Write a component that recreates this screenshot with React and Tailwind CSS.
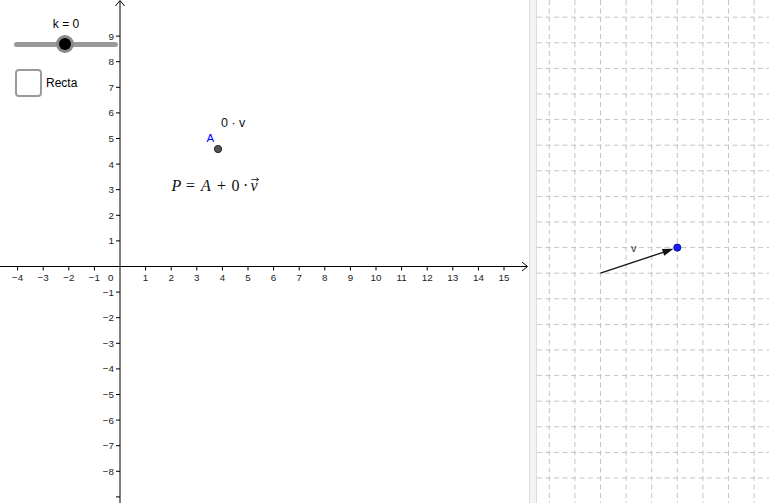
import React from 'react';

const U = 25.6;
const OX = 120;
const OY = 266.5;

const xTicks = [-4, -3, -2, -1, 1, 2, 3, 4, 5, 6, 7, 8, 9, 10, 11, 12, 13, 14, 15];
const yTicks = [9, 8, 7, 6, 5, 4, 3, 2, 1, -1, -2, -3, -4, -5, -6, -7, -8, -9];

const fmt = (n) => (n < 0 ? '\u2212' + Math.abs(n) : String(n));

/**
 * Graphics view — ejes, punto A y la fórmula.
 */
const GraphicsView = () => {
    const ax = OX + 3.83 * U;
    const ay = OY - 4.59 * U;

    return (
        <div className="relative w-[529px] h-full shrink-0">
            <svg width="529" height="503" className="block" style={{ fontFamily: '"Liberation Sans", Arial, sans-serif' }}>
                {/* x axis */}
                <line x1="0" y1={OY} x2="527" y2={OY} stroke="#000" strokeWidth="1" />
                <polyline points={`522,${OY - 4.5} 527.5,${OY} 522,${OY + 4.5}`} fill="none" stroke="#000" strokeWidth="1" />
                {/* y axis */}
                <line x1={OX} y1="503" x2={OX} y2="1" stroke="#000" strokeWidth="1" />
                <polyline points={`${OX - 4.5},6 ${OX},0.5 ${OX + 4.5},6`} fill="none" stroke="#000" strokeWidth="1" />

                {xTicks.map((n) => {
                    const x = OX + n * U;
                    return (
                        <g key={'x' + n}>
                            <line x1={x} y1={OY} x2={x} y2={OY + 4} stroke="#000" strokeWidth="1" />
                            <text x={x} y={OY + 14.5} fontSize="9.8" textAnchor="middle" fill="#222">{fmt(n)}</text>
                        </g>
                    );
                })}
                <text x="113.5" y={OY + 14.5} fontSize="9.8" textAnchor="end" fill="#222">0</text>

                {yTicks.map((n) => {
                    const y = OY - n * U;
                    return (
                        <g key={'y' + n}>
                            <line x1={OX - 4} y1={y} x2={OX} y2={y} stroke="#000" strokeWidth="1" />
                            {n !== -9 && (
                                <text x="114" y={y + 3.5} fontSize="9.8" textAnchor="end" fill="#222">{fmt(n)}</text>
                            )}
                        </g>
                    );
                })}

                {/* punto A */}
                <circle cx={ax} cy={ay} r="3.6" fill="#555" stroke="#222" strokeWidth="1" />
                <text x="206.5" y="142" fontSize="11.5" fill="#0000ff">A</text>
                <text x="221" y="126.5" fontSize="12.5" fill="#111">0 · v</text>

                {/* fórmula */}
                <g fontSize="16" fill="#111" style={{ fontFamily: '"Liberation Serif", "Times New Roman", serif' }}>
                    <text x="171.5" y="190.5" fontStyle="italic">P</text>
                    <text x="186" y="190.5">=</text>
                    <text x="201" y="190.5" fontStyle="italic">A</text>
                    <text x="217" y="190.5">+</text>
                    <text x="231.5" y="190.5">0</text>
                    <text x="243" y="190.5">·</text>
                    <text x="250.5" y="190.5" fontStyle="italic">v</text>
                </g>
                <path d="M251.5 179.5 H258.5 M256.3 177.7 L258.8 179.5 L256.3 181.3" fill="none" stroke="#111" strokeWidth="0.8" />
            </svg>

            {/* slider + checkbox */}
            <div className="absolute left-0 top-0 pt-[18px] pl-[12px] flex flex-col font-['Liberation_Sans',Arial,sans-serif] text-[12px] text-black">
                <div className="w-[108px] text-center leading-none">k = 0</div>
                <div className="relative w-[108px] h-[20px] flex items-center mt-[4px]">
                    <div className="w-full h-[5px] rounded-full bg-[#9a9a9a] mx-[2px]" />
                    <div className="absolute left-[44px] top-[1px] w-[18px] h-[18px] rounded-full bg-[#8a8a8a] flex items-center justify-center">
                        <div className="w-[12px] h-[12px] rounded-full bg-black" />
                    </div>
                </div>
                <div className="flex items-center gap-[4px] mt-[15px] ml-[3px]">
                    <div className="w-[27px] h-[28px] rounded-[4px] border-2 border-[#9a9a9a] bg-white" />
                    <span className="leading-none">Recta</span>
                </div>
            </div>
        </div>
    );
};

const gx = Array.from({ length: 9 }, (_, i) => 12.3 + i * U);
const gy = Array.from({ length: 20 }, (_, i) => 17.2 + i * U);

/**
 * Vista gráfica 2 — cuadrícula con el vector v.
 */
const VectorView = () => {
    const x1 = 12.3 + 2 * U;
    const y1 = 17.2 + 10 * U;
    const x2 = 12.3 + 5 * U;
    const y2 = 17.2 + 9 * U;
    const ang = Math.atan2(y2 - y1, x2 - x1);
    const len = 11;
    const half = 3.6;
    const bx = x2 - 4 * Math.cos(ang);
    const by = y2 - 4 * Math.sin(ang);
    const cx = bx - len * Math.cos(ang);
    const cy = by - len * Math.sin(ang);
    const px = -Math.sin(ang) * half;
    const py = Math.cos(ang) * half;

    return (
        <div className="flex-1 h-full bg-white">
            <svg width="232" height="503" className="block" style={{ fontFamily: '"Liberation Sans", Arial, sans-serif' }}>
                {gx.map((x) => (
                    <line key={'gx' + x} x1={x} y1="0" x2={x} y2="503" stroke="#c4c4c4" strokeWidth="1" strokeDasharray="5 3.5" />
                ))}
                {gy.map((y) => (
                    <line key={'gy' + y} x1="0" y1={y} x2="232" y2={y} stroke="#c4c4c4" strokeWidth="1" strokeDasharray="5 3.5" />
                ))}
                <line x1={x1} y1={y1} x2={cx} y2={cy} stroke="#111" strokeWidth="1.3" />
                <polygon points={`${bx},${by} ${cx + px},${cy + py} ${cx - px},${cy - py}`} fill="#111" />
                <text x="94" y="252" fontSize="11" fill="#333">v</text>
                <circle cx={x2} cy={y2} r="3.6" fill="#1a1aff" stroke="#00008a" strokeWidth="0.8" />
            </svg>
        </div>
    );
};

export default function App() {
    return (
        <div className="w-[769px] h-[503px] flex bg-white overflow-hidden">
            <GraphicsView />
            <div className="w-[8px] h-full shrink-0 bg-[#f3f3f3] border-l border-r border-[#dcdcdc]" />
            <VectorView />
        </div>
    );
}
